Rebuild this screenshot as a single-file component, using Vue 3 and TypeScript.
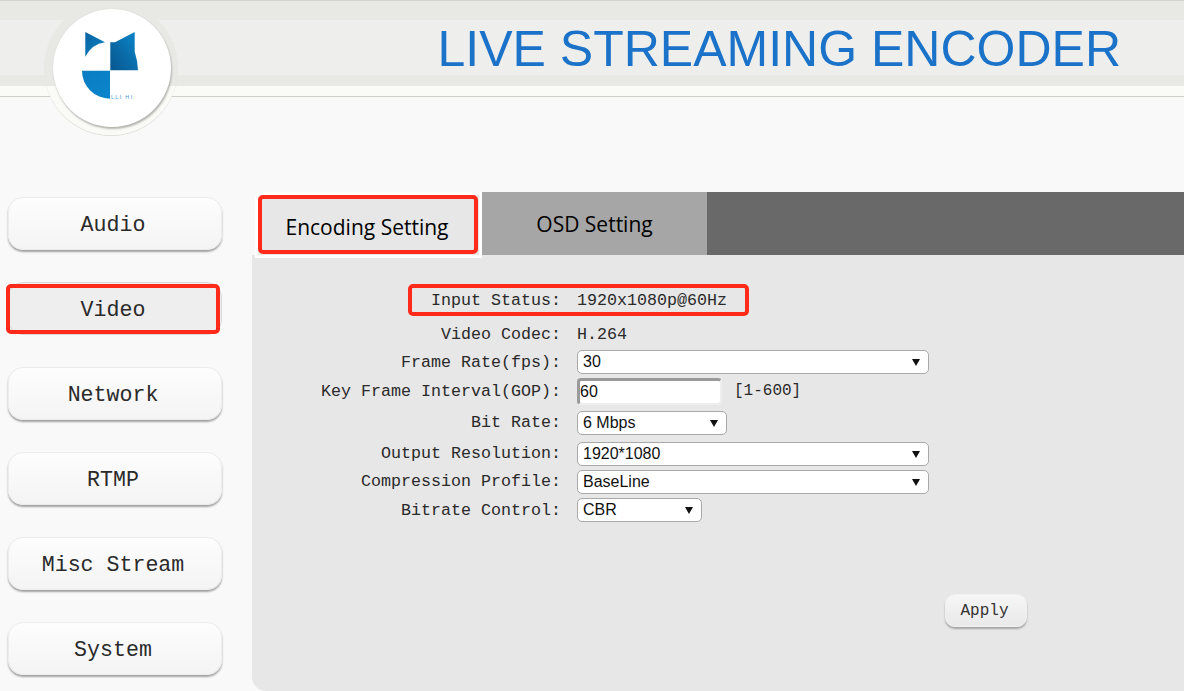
<script setup lang="ts">
const navItems: string[] = ['Audio', 'Video', 'Network', 'RTMP', 'Misc Stream', 'System']
</script>

<template>
  <div class="page">
    <header class="header">
      <div class="band-top"></div>
      <div class="band-mid">
        <h1 class="title">LIVE STREAMING ENCODER</h1>
      </div>
      <div class="band-low"></div>
      <div class="band-foot"></div>
      <div class="halo">
        <div class="disc">
          <svg class="logo" width="118" height="118" viewBox="53 9 118 118">
            <defs>
              <linearGradient id="earL" x1="0" y1="0" x2="1" y2="1">
                <stop offset="0" stop-color="#0a62a0" />
                <stop offset="1" stop-color="#0c84c8" />
              </linearGradient>
              <linearGradient id="earR" x1="1" y1="0" x2="0" y2="1">
                <stop offset="0" stop-color="#0b88cc" />
                <stop offset="0.55" stop-color="#0a6ba8" />
                <stop offset="1" stop-color="#07578f" />
              </linearGradient>
              <linearGradient id="quad" x1="0" y1="0" x2="1" y2="1">
                <stop offset="0" stop-color="#0a7cc2" />
                <stop offset="1" stop-color="#0b86cc" />
              </linearGradient>
            </defs>
            <path d="M85.3 32 L105 42.3 Q92 44 85.3 56.7 Z" fill="url(#earL)" />
            <path d="M134.7 32 L115 42.3 L110.3 42.3 L110.3 70.3 L138 70.3 Q137.5 60 134.7 51.7 Z" fill="url(#earR)" />
            <path d="M82 70.7 L110 70.7 L110 98.7 A28 28 0 0 1 82 70.7 Z" fill="url(#quad)" />
            <text x="111" y="99" class="logo-text">LLI HI</text>
          </svg>
        </div>
      </div>
    </header>

    <div class="body">
      <nav class="sidebar">
        <button
          v-for="item in navItems"
          :key="item"
          class="nav-btn"
          :class="{ active: item === 'Video' }"
        >{{ item }}</button>
        <span class="mark mark-video"></span>
      </nav>

      <main class="main">
        <div class="tabs">
          <div class="tab tab-active">Encoding Setting</div>
          <div class="tab tab-idle">OSD Setting</div>
          <div class="tab-fill"></div>
          <span class="mark mark-tab"></span>
        </div>

        <section class="panel">
          <div class="form">
            <div class="row r-status">
              <label>Input Status:</label>
              <span>1920x1080p@60Hz</span>
              <span class="mark mark-status"></span>
            </div>
            <div class="row r-codec">
              <label>Video Codec:</label>
              <span>H.264</span>
            </div>
            <div class="row">
              <label>Frame Rate(fps):</label>
              <div class="sel w-full">
                <span>30</span>
                <svg class="arrow" width="8" height="8" viewBox="0 0 8 8"><path d="M0 1 H8 L4 8 Z" /></svg>
              </div>
            </div>
            <div class="row r-gop">
              <label>Key Frame Interval(GOP):</label>
              <input class="text-input" type="text" value="60" />
              <span class="hint">[1-600]</span>
            </div>
            <div class="row r-bit">
              <label>Bit Rate:</label>
              <div class="sel w-bit low">
                <span>6 Mbps</span>
                <svg class="arrow" width="8" height="8" viewBox="0 0 8 8"><path d="M0 1 H8 L4 8 Z" /></svg>
              </div>
            </div>
            <div class="row r-out">
              <label>Output Resolution:</label>
              <div class="sel w-full low">
                <span>1920*1080</span>
                <svg class="arrow" width="8" height="8" viewBox="0 0 8 8"><path d="M0 1 H8 L4 8 Z" /></svg>
              </div>
            </div>
            <div class="row">
              <label>Compression Profile:</label>
              <div class="sel w-full low">
                <span>BaseLine</span>
                <svg class="arrow" width="8" height="8" viewBox="0 0 8 8"><path d="M0 1 H8 L4 8 Z" /></svg>
              </div>
            </div>
            <div class="row r-ctrl">
              <label>Bitrate Control:</label>
              <div class="sel w-ctrl">
                <span>CBR</span>
                <svg class="arrow" width="8" height="8" viewBox="0 0 8 8"><path d="M0 1 H8 L4 8 Z" /></svg>
              </div>
            </div>
          </div>
          <div class="actions">
            <button class="apply">Apply</button>
          </div>
        </section>
      </main>
    </div>
  </div>
</template>

<style>
html, body { margin: 0; background: #f9f9f9; overflow: hidden; }
</style>

<style scoped>
.page {
  width: 1184px;
  height: 691px;
  overflow: hidden;
  background: #f9f9f9;
  font-family: "Liberation Mono", monospace;
  color: #222;
}

/* header */
.header {
  position: relative;
  height: 97px;
  box-sizing: border-box;
  display: flex;
  flex-direction: column;
  border-bottom: 1px solid #cfcfc9;
}
.band-top { height: 19px; background: #e8e8e5; border-top: 1px solid #d4d4d0; }
.band-mid {
  height: 55px;
  background: #eeeeec;
  display: flex;
  justify-content: flex-end;
  align-items: center;
  padding-right: 63px;
}
.band-low { height: 11px; background: #e8e8e5; }
.band-foot { flex: 1; background: #fafaf6; }
.title {
  margin: 4px 0 0;
  font-family: "Liberation Sans", Arial, sans-serif;
  font-weight: 400;
  font-size: 50px;
  line-height: 55px;
  color: #1b72c9;
  white-space: nowrap;
}

/* logo */
.halo {
  position: absolute;
  left: 44px;
  top: 1px;
  width: 134px;
  height: 134px;
  box-sizing: border-box;
  border-radius: 50%;
  background: linear-gradient(#e8e8e5 0, #e8e8e5 85px, #fafaf6 85px);
  box-shadow: 0 1px 0 #dedfd8;
}
.disc {
  position: absolute;
  left: 9px;
  top: 8px;
  width: 118px;
  height: 118px;
  border-radius: 50%;
  background: #fff;
  box-shadow: 1px 2px 2px #b5b5b0, 0 0 1px #c8c8c4;
}
.logo { display: block; }
.logo-text {
  font-family: "Liberation Sans", Arial, sans-serif;
  font-size: 5.5px;
  letter-spacing: 1.3px;
  fill: #3f9cd6;
}

/* body */
.body {
  display: grid;
  grid-template-columns: 252px 1fr;
  height: 594px;
}
.sidebar {
  position: relative;
  display: flex;
  flex-direction: column;
  gap: 32px;
  padding: 100px 0 0 8px;
  box-sizing: border-box;
}
.nav-btn {
  display: block;
  width: 214px;
  height: 53px;
  flex: none;
  padding: 2px 4px 0 0;
  box-sizing: border-box;
  border: 1px solid #ececec;
  border-radius: 15px;
  background: linear-gradient(#fdfdfd, #f4f4f4);
  box-shadow: 0 2px 2px #a2a2a2;
  font-family: "Liberation Mono", monospace;
  font-size: 21.6px;
  color: #2a2a2a;
}
.nav-btn.active {
  background: #eeeeee;
  border-color: #d8d8d8;
  box-shadow: none;
}

.main {
  margin-top: 95px;
  display: flex;
  flex-direction: column;
  min-width: 0;
}
.tabs {
  position: relative;
  display: flex;
  height: 63px;
  flex: none;
  font-family: "Open Sans", "Noto Sans", sans-serif;
  font-size: 21px;
  color: #000;
}
.tab {
  box-sizing: border-box;
  display: flex;
  align-items: center;
  justify-content: center;
  white-space: nowrap;
}
.tab-active {
  width: 227px;
  height: 66px;
  margin-left: 3px;
  padding: 3px 3px 0 0;
  background: #e7e7e7;
  border: 3px solid #fff;
  border-top-left-radius: 6px;
  position: relative;
  z-index: 1;
}
.tab-idle { width: 225px; height: 63px; background: #a6a6a6; }
.tab-fill { flex: 1; background: #696969; }

.panel {
  flex: 1;
  display: flex;
  flex-direction: column;
  background: #e7e7e7;
  border-bottom-left-radius: 14px;
}
.form {
  padding-top: 31px;
  display: flex;
  flex-direction: column;
  font-size: 16.67px;
  color: #2a2a2a;
}
.row {
  position: relative;
  display: grid;
  grid-template-columns: 309px auto 1fr;
  column-gap: 16px;
  align-items: center;
  height: 28px;
  white-space: pre;
}
.row label { text-align: right; }
.r-codec { margin-top: 6px; }
.r-gop { margin-top: 1px; }
.r-bit { margin-top: 3px; }
.r-out { margin-top: 3px; }
.r-ctrl { margin-top: 1px; }

.sel {
  box-sizing: border-box;
  height: 24px;
  display: flex;
  align-items: center;
  justify-content: space-between;
  padding: 0 8px 0 5px;
  background: #fff;
  border: 1px solid #a9a9a9;
  border-radius: 5px;
  font-family: "Liberation Sans", Arial, sans-serif;
  font-size: 16px;
  color: #111;
}
.sel.low { margin-top: 2px; }
.w-full { width: 352px; }
.w-bit { width: 150px; }
.w-ctrl { width: 125px; }
.arrow { fill: #111; display: block; }

.text-input {
  box-sizing: border-box;
  width: 145px;
  height: 27px;
  padding: 1px 0 0 0;
  border-style: solid;
  border-width: 3px 2px 2px 3px;
  border-color: #9a9a9a #eeeeee #eeeeee #9a9a9a;
  border-radius: 4px;
  background: #fff;
  font-family: "Liberation Sans", Arial, sans-serif;
  font-size: 16px;
  color: #111;
  outline: none;
}
.hint { margin-left: -4px; font-size: 16px; }

.actions {
  display: flex;
  justify-content: flex-end;
  padding: 70px 157px 0 0;
}
.apply {
  width: 82px;
  height: 33px;
  padding: 0 3px 0 0;
  box-sizing: border-box;
  border: 1px solid #f0f0f0;
  border-radius: 10px;
  background: linear-gradient(#f6f6f6, #e9e9e9);
  box-shadow: 0 2px 2px #a5a5a5;
  font-family: "Liberation Mono", monospace;
  font-size: 16px;
  color: #333;
}

/* red annotation frames painted on the screenshot */
.mark {
  position: absolute;
  box-sizing: border-box;
  border: 4px solid #ff2a1a;
  border-radius: 5px;
  pointer-events: none;
  z-index: 3;
}
.mark-video { left: 6px; top: 187px; width: 214px; height: 50px; }
.mark-tab { left: 6px; top: 3px; width: 220px; height: 59px; }
.mark-status { left: 156px; top: -2px; width: 341px; height: 32px; }
</style>
